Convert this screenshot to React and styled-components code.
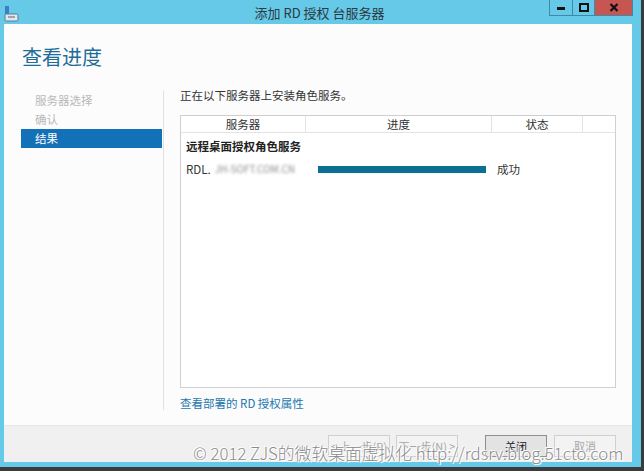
import styled, { createGlobalStyle } from 'styled-components'

const GlobalStyle = createGlobalStyle`
    html, body {
        margin: 0;
        padding: 0;
        background: #3b3b3b;
    }
    body {
        font-family: "Noto Sans CJK SC", "Noto Sans", sans-serif;
    }
`

const Page = styled.div`
    width: 644px;
    height: 471px;
    position: relative;
    overflow: hidden;
    background: #3b3b3b;
`

const Window = styled.div`
    width: 641px;
    height: 467px;
    background: #66c9e8;
    display: flex;
    flex-direction: column;
`

const TitleBar = styled.div`
    height: 24px;
    display: flex;
    align-items: flex-start;
`

const AppIcon = styled.div`
    width: 16px;
    height: 18px;
    margin: 4px 0 0 4px;
`

const Title = styled.div`
    flex: 1;
    text-align: center;
    font-size: 13px;
    line-height: 26px;
    color: #2a3a40;
    padding-left: 70px;
`

const Controls = styled.div`
    display: flex;
    margin-right: 8px;
`

const CtrlButton = styled.div`
    width: ${p => p.$w}px;
    height: 16px;
    background: ${p => p.$close ? '#c75552' : 'transparent'};
    border: 1px solid #3e8aa6;
    border-top: none;
    border-left: ${p => p.$first ? '1px solid #3e8aa6' : 'none'};
    box-sizing: border-box;
    display: flex;
    align-items: center;
    justify-content: center;
`

const Content = styled.div`
    margin: 0 9px 5px 4px;
    flex: 1;
    display: flex;
    flex-direction: column;
    background: #fcfcfc;
`

const Main = styled.div`
    flex: 1;
    display: flex;
    flex-direction: column;
`

const Heading = styled.div`
    font-size: 20px;
    color: #1f6d98;
    padding: 18px 0 0 18px;
    height: 48px;
    line-height: 30px;
    box-sizing: border-box;
`

const Body = styled.div`
    display: flex;
    padding-top: 18px;
`

const Nav = styled.div`
    width: 141px;
    margin-left: 17px;
    display: flex;
    flex-direction: column;
    height: 320px;
    border-right: 1px solid #e2e2e2;
    padding-right: 1px;
`

const NavItem = styled.div`
    height: 19px;
    line-height: 19px;
    font-size: 11.5px;
    padding-left: 14px;
    color: ${p => p.$active ? '#ffffff' : '#b9b9b9'};
    background: ${p => p.$active ? '#1271b7' : 'transparent'};
    margin-top: ${p => p.$first ? '1px' : '0'};
`

const Pane = styled.div`
    margin-left: 16px;
    width: 436px;
    display: flex;
    flex-direction: column;
`

const Lead = styled.div`
    font-size: 11.5px;
    color: #333;
    height: 27px;
    line-height: 14px;
    margin-top: -2px;
`

const Table = styled.div`
    height: 273px;
    border: 1px solid #cfcfcf;
    background: #ffffff;
    box-sizing: border-box;
    display: flex;
    flex-direction: column;
`

const HeaderRow = styled.div`
    display: grid;
    grid-template-columns: 125px 186px 91px 1fr;
    height: 16px;
    border-bottom: 1px solid #e3e3e3;
`

const HeaderCell = styled.div`
    font-size: 11.5px;
    color: #333;
    text-align: center;
    line-height: 16px;
    border-right: ${p => p.$last ? 'none' : '1px solid #e3e3e3'};
`

const Group = styled.div`
    font-size: 11.5px;
    font-weight: 700;
    color: #222;
    padding: 5px 0 0 5px;
    line-height: 16px;
`

const Row = styled.div`
    display: flex;
    align-items: center;
    height: 22px;
    margin-top: 4px;
    font-size: 11.5px;
    color: #333;
`

const ServerName = styled.div`
    width: 132px;
    padding-left: 5px;
    display: flex;
`

const Blurred = styled.span`
    color: #8a8a8a;
    filter: blur(1.4px);
    font-size: 10px;
    margin-left: 4px;
`

const Bar = styled.div`
    width: 168px;
    height: 7px;
    background: #0b6f8f;
    margin-right: 11px;
`

const Link = styled.div`
    font-size: 11.5px;
    color: #1b77ad;
    margin-top: 7px;
`

const Footer = styled.div`
    height: 37px;
    background: #f0f0f0;
    border-top: 1px solid #e6e6e6;
    box-sizing: border-box;
    display: flex;
    align-items: flex-start;
    padding: 9px 0 0 324px;
`

const Button = styled.div`
    width: 62px;
    height: 22px;
    box-sizing: border-box;
    border: 1px solid ${p => p.$default ? '#8f8f8f' : '#d0d0d0'};
    background: ${p => p.$default ? '#e3e3e3' : '#f3f3f3'};
    color: ${p => p.$default ? '#222' : '#a8a8a8'};
    font-size: 11px;
    text-align: center;
    line-height: 20px;
    margin-right: ${p => p.$gap}px;
`

const Watermark = styled.div`
    position: absolute;
    left: 193px;
    top: 441px;
    font-size: 16.8px;
    font-weight: 300;
    font-family: "Noto Sans CJK SC", "Noto Sans", sans-serif;
    color: #8a8a8a;
    white-space: nowrap;
    text-shadow: 0 0 2px #fff, 0 0 2px #fff, 1px 1px 0 #fff, -1px -1px 0 #fff;
    line-height: 24px;
`

const App = () => {
    return (
        <Page>
            <GlobalStyle />
            <Window>
                <TitleBar>
                    <AppIcon>
                        <svg width="16" height="18" viewBox="0 0 16 18">
                            <rect x="1" y="1" width="4" height="8" fill="#3a7fc0" />
                            <rect x="1" y="9" width="13" height="7" rx="1" fill="#e6e6e6" stroke="#4b82a8" strokeWidth="1" />
                            <rect x="4" y="11" width="7" height="2" fill="#9aa7b0" />
                        </svg>
                    </AppIcon>
                    <Title>添加 RD 授权 台服务器</Title>
                    <Controls>
                        <CtrlButton $w={24} $first>
                            <svg width="10" height="4"><rect x="1" y="1" width="8" height="3" fill="#111" /></svg>
                        </CtrlButton>
                        <CtrlButton $w={22}>
                            <svg width="10" height="9"><rect x="1" y="1" width="8" height="7" fill="none" stroke="#111" strokeWidth="2" /></svg>
                        </CtrlButton>
                        <CtrlButton $w={38} $close>
                            <svg width="10" height="9" viewBox="0 0 10 9">
                                <path d="M1.5 1 L8.5 8 M8.5 1 L1.5 8" stroke="#111" strokeWidth="2.2" />
                            </svg>
                        </CtrlButton>
                    </Controls>
                </TitleBar>
                <Content>
                    <Main>
                        <Heading>查看进度</Heading>
                        <Body>
                            <Nav>
                                <NavItem $first>服务器选择</NavItem>
                                <NavItem>确认</NavItem>
                                <NavItem $active>结果</NavItem>
                            </Nav>
                            <Pane>
                                <Lead>正在以下服务器上安装角色服务。</Lead>
                                <Table>
                                    <HeaderRow>
                                        <HeaderCell>服务器</HeaderCell>
                                        <HeaderCell>进度</HeaderCell>
                                        <HeaderCell>状态</HeaderCell>
                                        <HeaderCell $last />
                                    </HeaderRow>
                                    <Group>远程桌面授权角色服务</Group>
                                    <Row>
                                        <ServerName>RDL.<Blurred>JH-SOFT.COM.CN</Blurred></ServerName>
                                        <Bar />
                                        成功
                                    </Row>
                                </Table>
                                <Link>查看部署的 RD 授权属性</Link>
                            </Pane>
                        </Body>
                    </Main>
                    <Footer>
                        <Button $gap={6}>&lt; 上一步(P)</Button>
                        <Button $gap={27}>下一步(N) &gt;</Button>
                        <Button $gap={7} $default>关闭</Button>
                        <Button>取消</Button>
                    </Footer>
                </Content>
            </Window>
            <Watermark>© 2012 ZJS的微软桌面虚拟化 http://rdsrv.blog.51cto.com</Watermark>
        </Page>
    )
}

export default App
